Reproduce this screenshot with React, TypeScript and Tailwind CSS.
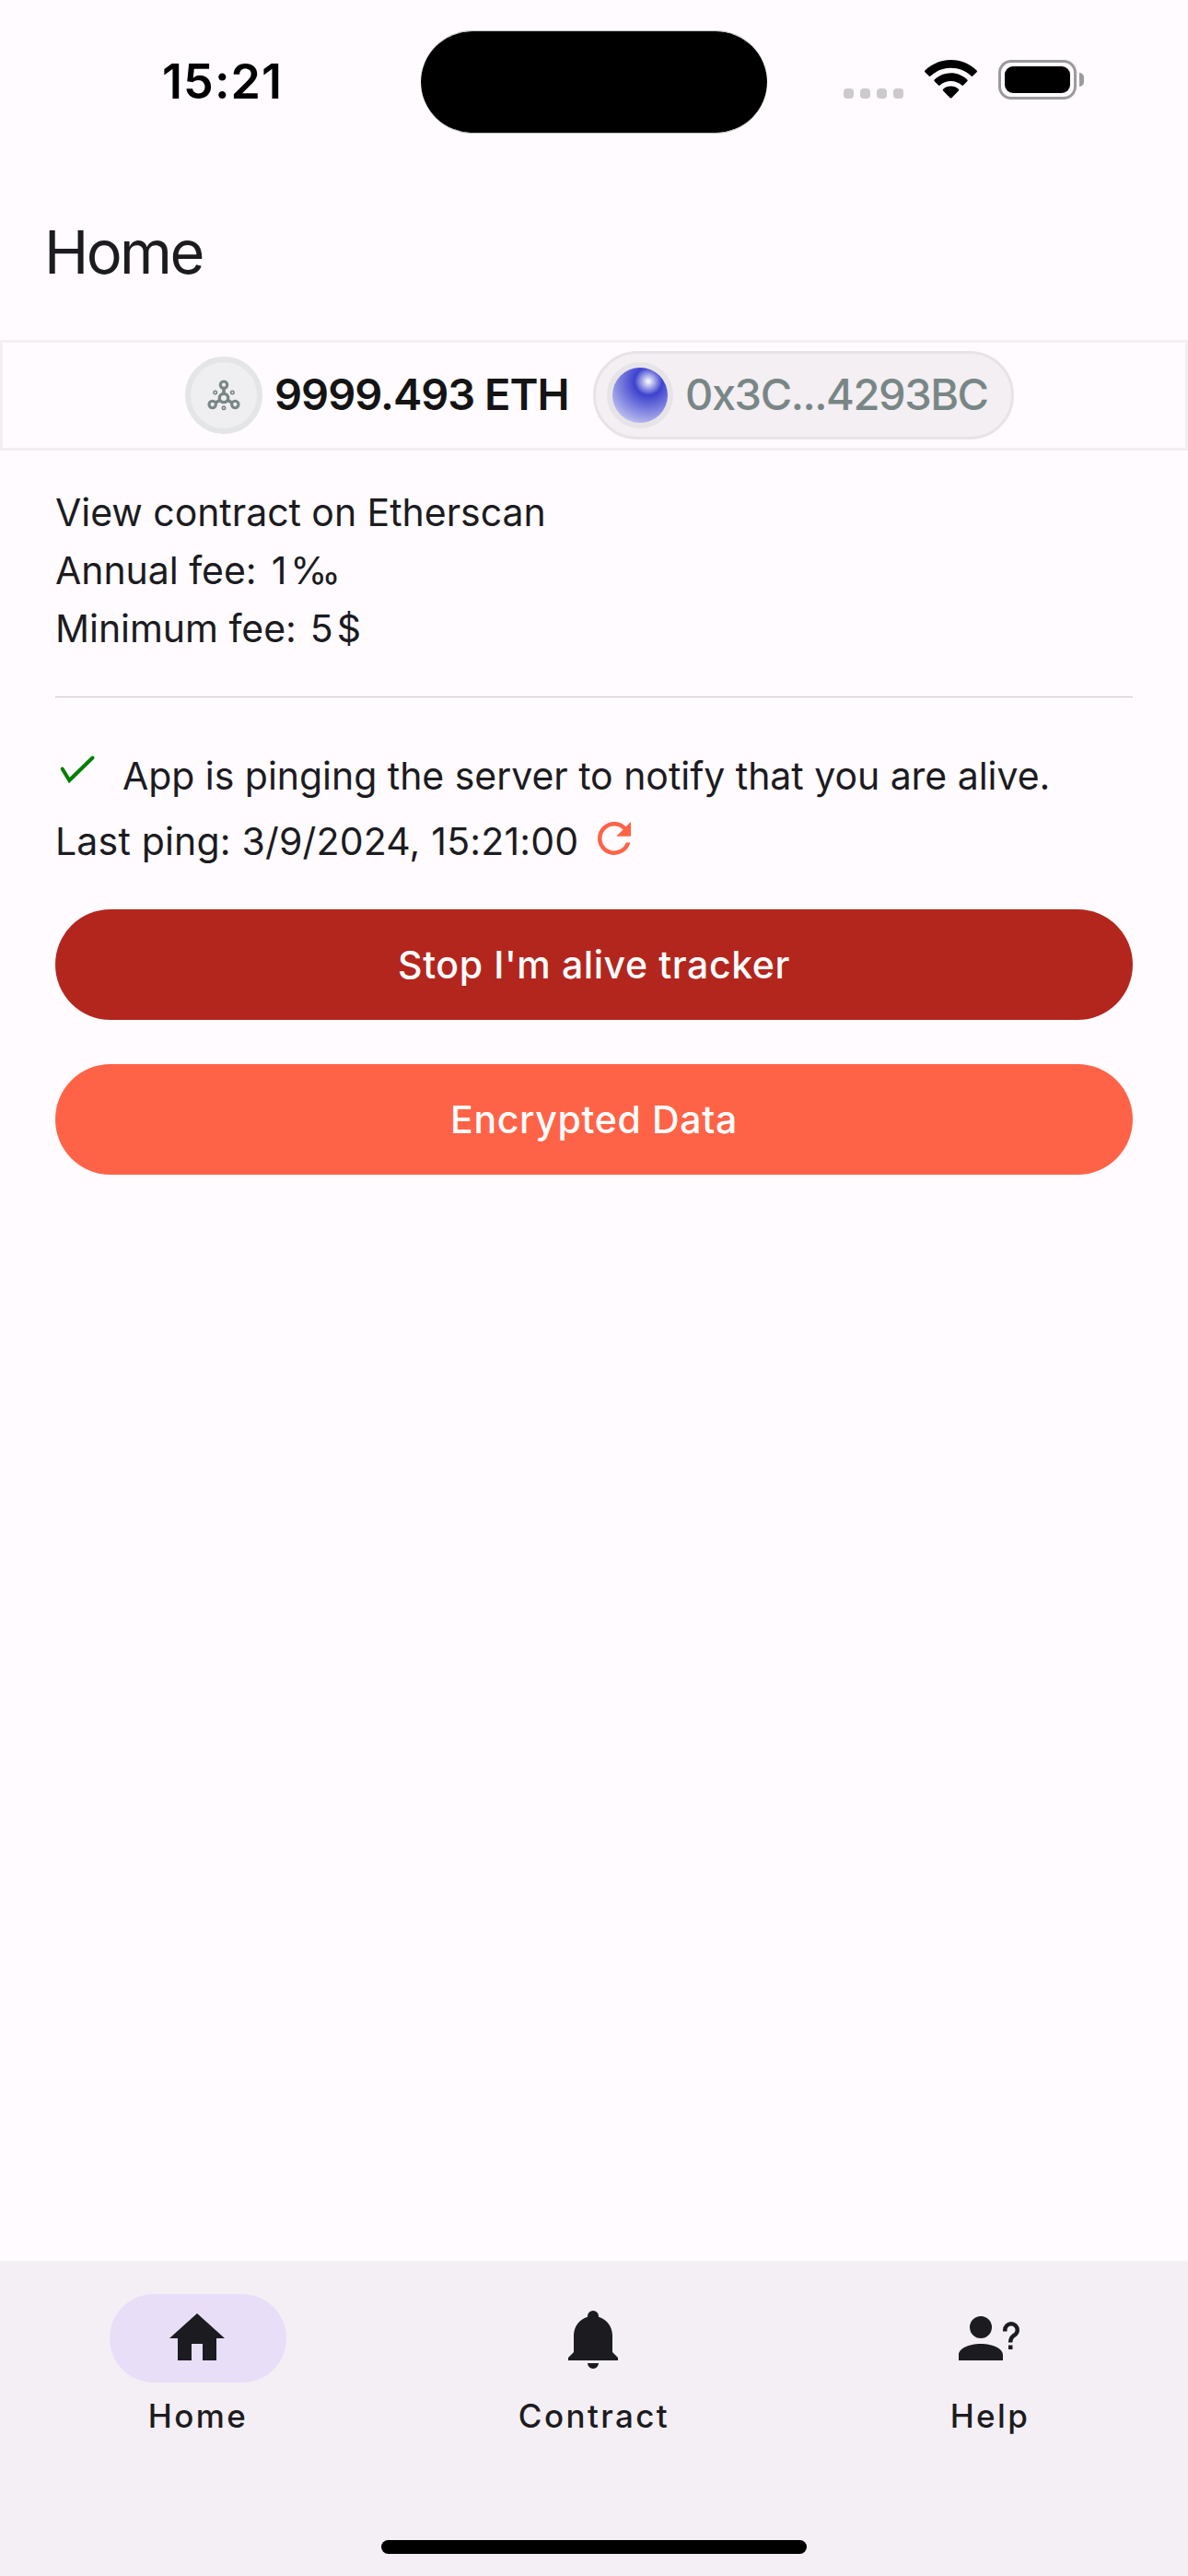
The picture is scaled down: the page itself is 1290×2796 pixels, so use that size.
import React from "react";

function StatusIcons() {
  return (
    <div className="flex h-[43px] items-end">
      <div className="mb-px flex gap-[7px]">
        {[0, 1, 2, 3].map((i) => (
          <span key={i} className="size-[11px] rounded-[4px] bg-[#cccacc]" />
        ))}
      </div>
      <svg className="ml-[23px] mb-px" width="57" height="42" viewBox="0 0 57 42">
        <path d="M28.5 0C39.5 0 49.4 4.4 56.6 11.5c.5.5.5 1.300 0 1.800L52.300 17.600c-.5.500-1.200.500-1.700 0C44.800 12.100 37 8.800 28.500 8.800S12.200 12.100 6.400 17.600c-.5.500-1.200.500-1.700 0L.4 13.300c-.5-.5-.5-1.300 0-1.800C7.600 4.400 17.500 0 28.500 0z" />
        <path d="M28.500 14.300c6.900 0 13.100 2.700 17.800 7.100.5.500.5 1.300 0 1.800l-4.300 4.300c-.5.500-1.200.5-1.700 0-3.100-2.800-7.300-4.500-11.800-4.500s-8.700 1.700-11.800 4.500c-.5.500-1.200.5-1.700 0l-4.300-4.300c-.5-.5-.5-1.300 0-1.800 4.700-4.400 10.900-7.100 17.800-7.100z" />
        <path d="M28.500 28.600c3.200 0 6.100 1.200 8.300 3.100.5.500.6 1.300.1 1.800l-7.500 7.700c-.5.500-1.300.5-1.800 0l-7.500-7.700c-.5-.5-.4-1.300.1-1.800 2.200-1.900 5.100-3.100 8.300-3.100z" />
      </svg>
      <div className="ml-[23px] flex items-center gap-[3px]">
        <div className="h-[43px] w-[85px] rounded-[14px] border-[3px] border-[#9c9a9c] p-1">
          <div className="h-[29px] w-[71px] rounded-[9px] bg-black" />
        </div>
        <span className="h-[15px] w-[5px] rounded-r-full bg-[#9c9a9c]" />
      </div>
    </div>
  );
}

function NetworkIcon() {
  return (
    <svg width="36" height="36" viewBox="0 0 36 36" fill="none" stroke="#798686">
      <circle cx="18" cy="6.700" r="3.700" strokeWidth="3.100" />
      <circle cx="18" cy="21" r="4.700" strokeWidth="3.300" />
      <circle cx="5.700" cy="28" r="3.700" strokeWidth="3.100" />
      <circle cx="30.300" cy="28" r="3.700" strokeWidth="3.100" />
      <path d="M18 11v5M13.500 23.500l-4.300 2.500M22.500 23.500l4.300 2.500" strokeWidth="3.600" />
      <circle cx="8.700" cy="15" r="1.700" strokeWidth="1.600" />
      <circle cx="27.300" cy="15" r="1.700" strokeWidth="1.600" />
      <circle cx="18" cy="31.800" r="1.700" strokeWidth="1.600" />
    </svg>
  );
}

const tabs = [
  {
    label: "Home",
    active: true,
    path: "M10 20V14H14V20H19V12H22L12 3L2 12H5V20H10Z",
  },
  {
    label: "Contract",
    active: false,
    path: "M21 19V20H3V19L5 17V11C5 7.900 7.030 5.170 10 4.290C10 4.190 10 4.100 10 4A2 2 0 0 1 12 2A2 2 0 0 1 14 4C14 4.100 14 4.190 14 4.290C16.970 5.170 19 7.900 19 11V17L21 19M14 21A2 2 0 0 1 12 23A2 2 0 0 1 10 21",
  },
  {
    label: "Help",
    active: false,
    path: "M13 8A4 4 0 1 1 9 4A4 4 0 0 1 13 8M17 18V20H1V18C1 15.790 4.580 14 9 14S17 15.790 17 18M20.500 14.500V16H19V14.500H20.500M18.500 9.500H17V9A3 3 0 0 1 20 6A3 3 0 0 1 23 9C23 9.970 22.500 10.880 21.710 11.410L21.410 11.600C20.840 12 20.500 12.610 20.500 13.300V13.500H19V13.300C19 12.110 19.600 11 20.590 10.350L20.880 10.160C21.270 9.900 21.500 9.470 21.500 9A1.500 1.500 0 0 0 20 7.500A1.500 1.500 0 0 0 18.500 9V9.500Z",
  },
];

export default function App() {
  return (
    <div className="flex h-[2796px] w-[1290px] flex-col bg-[#fffbff] font-['Inter',sans-serif] text-[#1c1b1f]">
      <header className="grid h-[177px] grid-cols-[457px_376px_1fr] pt-[33px]">
        <div className="pl-[176px] pt-[25px] text-[52px] leading-[62px] font-semibold tracking-[1.1px] text-black">15:21</div>
        <div className="h-[112px] rounded-full border-y border-[#b8bab8] bg-black bg-clip-padding" />
        <div className="pl-[83px] pt-8">
          <StatusIcons />
        </div>
      </header>

      <h1 className="h-[192px] pl-[48px] pt-[57px] text-[65px] leading-[80px] tracking-[-2.6px]">Home</h1>

      <section className="flex h-[120px] items-center border-[3px] border-[#f2eff2] pl-[198px]">
        <div className="flex size-[84px] items-center justify-center rounded-full border-[6px] border-[#e3e5e6] bg-[#efeef1]">
          <NetworkIcon />
        </div>
        <span className="ml-[13px] w-[346px] whitespace-nowrap pb-[3px] text-[47px] leading-[56px] font-semibold tracking-[-1px] text-[#141414]">9999.493 ETH</span>
        <div className="flex h-[96px] w-[457px] items-center rounded-full border-[3px] border-[#e7e3e6] bg-[#f3eff2] pl-3">
          <div className="size-[72px] rounded-full border-[6px] border-[#e7e4e7]">
            <div className="size-[60px] rounded-full bg-[radial-gradient(circle_at_39px_15px,#ffffff_0px,#3d42cf_15px,#c4c6f0_50px)]" />
          </div>
          <span className="ml-[13px] whitespace-nowrap pb-[3px] text-[47px] leading-[56px] font-medium tracking-[-1.45px] text-[#798686]">0x3C...4293BC</span>
        </div>
      </section>

      <main className="flex flex-1 flex-col px-[60px] pt-[36px] text-[41px] tracking-[-0.04px]">
        <div className="flex flex-col leading-[63px]">
          <p>View contract on Etherscan</p>
          <p className="flex gap-[16px]"><span>Annual fee:</span><span className="tracking-[4px]">1‰</span></p>
          <p className="flex gap-[15px]"><span>Minimum fee:</span><span className="tracking-[4px]">5$</span></p>
        </div>
        <hr className="mt-[42px] h-px border-0 bg-[#cac4d0]" />

        <div className="mt-[48px] flex h-[72px] items-center">
          <svg className="mb-[12px]" width="48" height="48" viewBox="0 0 48 48" fill="none" stroke="#008000" strokeWidth="4" strokeLinecap="round">
            <path d="M7.700 23.500L15.300 36L40.500 11.500" />
          </svg>
          <p className="ml-[25px] whitespace-nowrap pt-1">App is pinging the server to notify that you are alive.</p>
        </div>
        <div className="mt-px flex h-[66px] items-center">
          <p className="w-[580px] whitespace-nowrap pt-[5px] tracking-[0.18px]">Last ping: 3/9/2024, 15:21:00</p>
          <svg className="mb-0.5" width="54" height="54" viewBox="0 0 24 24" fill="#ff6347">
            <path d="M17.650 6.350A7.958 7.958 0 0 0 12 4a8 8 0 1 0 7.730 10h-2.080A6 6 0 1 1 12 6c1.660 0 3.140.690 4.220 1.780L13 11h7V4l-2.350 2.350z" />
          </svg>
        </div>

        <button className="mt-[43px] h-[120px] rounded-full bg-[#b3261e] pt-0.5 font-medium tracking-[0.6px] text-white">Stop I'm alive tracker</button>
        <button className="mt-[48px] h-[120px] rounded-full bg-[#ff6347] pt-0.5 font-medium tracking-[0.65px] text-white">Encrypted Data</button>
      </main>

      <nav className="flex h-[342px] flex-col bg-[#f3eff4]">
        <div className="grid grid-cols-3 pt-9">
          {tabs.map((tab) => (
            <div key={tab.label} className="flex flex-col items-center">
              <div className={tab.active ? "flex h-24 w-48 justify-center rounded-full bg-[#e8def8] pt-3 pr-0.5" : "flex h-24 w-48 justify-center pt-3 pr-0.5"}>
                <svg width="72" height="72" viewBox="0 0 24 24" fill="#1c1b1f">
                  <path d={tab.path} />
                </svg>
              </div>
              <span className="mt-3 text-[35px] leading-[48px] font-medium tracking-[2.4px]">{tab.label}</span>
            </div>
          ))}
        </div>
        <div className="mx-auto mt-auto mb-6 h-[15px] w-[462px] rounded-full bg-black" />
      </nav>
    </div>
  );
}
